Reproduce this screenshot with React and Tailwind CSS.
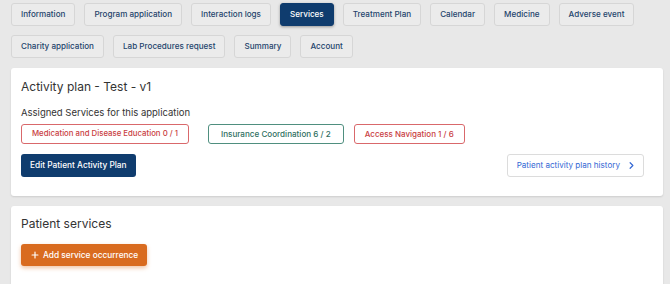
import { ChevronRight, Plus } from 'lucide-react';

const tabs1 = ['Information', 'Program application', 'Interaction logs', 'Services', 'Treatment Plan', 'Calendar', 'Medicine', 'Adverse event'];
const tabs2 = ['Charity application', 'Lab Procedures request', 'Summary', 'Account'];

function Tab({ label }) {
    const active = label === 'Services';
    return (
        <button
            className={`h-[23px] whitespace-nowrap rounded-[3px] border px-[9px] text-[8.1px] font-medium leading-none ${
                active
                    ? 'border-[#0f3c6e] bg-[#0f3c6e] text-white shadow-[0_1px_3px_rgba(0,0,0,0.35)]'
                    : 'border-[#d6d6d6] bg-[#ebebeb] text-[#24446b]'
            }`}>
            {label}
        </button>
    );
}

export default function App() {
    return (
        <div className="min-h-[284px] w-[670px] overflow-hidden bg-[#e8e8e8] pl-[11px] pr-[7px] font-['Inter',sans-serif]">
            {/* Tabs */}
            <div className="flex gap-[9px] pt-[3px]">
                {tabs1.map(t => <Tab key={t} label={t} />)}
            </div>
            <div className="mt-[9px] flex gap-[9px]">
                {tabs2.map(t => <Tab key={t} label={t} />)}
            </div>

            {/* Activity plan */}
            <div className="mt-[10px] rounded-[3px] bg-white px-[10px] pb-[19px] pt-[11px] shadow-[0_1px_2px_rgba(0,0,0,0.12)]">
                <h2 className="text-[12px] leading-[15px] text-[#333]">Activity plan - Test - v1</h2>
                <p className="mt-[13px] text-[9.5px] leading-[12px] text-[#333]">Assigned Services for this application</p>
                <div className="mt-[5px] flex">
                    <span className="flex h-[20px] items-center whitespace-nowrap rounded-[3px] border border-[#d9686b] px-[10px] text-[7.8px] font-medium text-[#c9403f]">
                        Medication and Disease Education 0 / 1
                    </span>
                    <span className="ml-[19px] flex h-[20px] items-center whitespace-nowrap rounded-[3px] border border-[#4f8f7f] px-[12px] text-[8.1px] font-medium text-[#2f6f5f]">
                        Insurance Coordination 6 / 2
                    </span>
                    <span className="ml-[10px] flex h-[20px] items-center whitespace-nowrap rounded-[3px] border border-[#d9686b] px-[10px] text-[8px] font-medium text-[#c9403f]">
                        Access Navigation 1 / 6
                    </span>
                </div>
                <div className="mt-[10px] flex items-center justify-between pr-[9px]">
                    <button className="h-[23px] whitespace-nowrap rounded-[3px] bg-[#0f3c6e] px-[9px] text-[8.3px] font-medium text-white">
                        Edit Patient Activity Plan
                    </button>
                    <button className="flex h-[23px] items-center gap-[6px] whitespace-nowrap rounded-[3px] border border-[#dcdcdc] bg-white pl-[9px] pr-[6px] text-[8.1px] text-[#3568d4]">
                        Patient activity plan history
                        <ChevronRight size={11} strokeWidth={2.6} className="text-[#3568d4]" />
                    </button>
                </div>
            </div>

            {/* Patient services */}
            <div className="mt-[10px] h-[90px] rounded-[3px] bg-white px-[10px] pt-[10px] shadow-[0_1px_2px_rgba(0,0,0,0.12)]">
                <h2 className="text-[12px] leading-[15px] text-[#333]">Patient services</h2>
                <button className="mt-[13px] flex h-[22px] items-center gap-[3px] whitespace-nowrap rounded-[3px] bg-[#d96b1f] px-[9px] text-[8.3px] font-medium text-white shadow-[0_2px_4px_rgba(217,107,31,0.4)]">
                    <Plus size={10} strokeWidth={2.8} />
                    Add service occurrence
                </button>
            </div>
        </div>
    );
}
